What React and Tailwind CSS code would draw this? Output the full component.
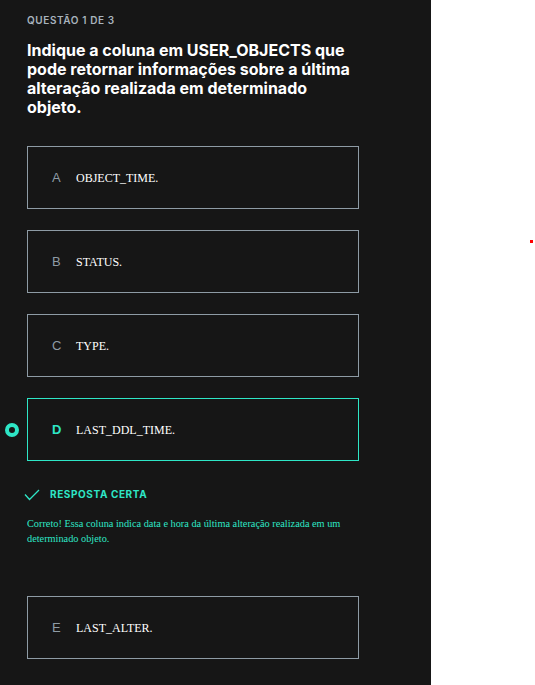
import React from 'react';

const options = [
  { letter: 'A', text: 'OBJECT_TIME.' },
  { letter: 'B', text: 'STATUS.' },
  { letter: 'C', text: 'TYPE.' },
  { letter: 'D', text: 'LAST_DDL_TIME.', selected: true },
  { letter: 'E', text: 'LAST_ALTER.' },
];

const Option = ({ letter, text, selected }) => (
  <div
    className={
      'relative flex items-center h-[63px] w-[332px] border ' +
      (selected ? 'border-[#2ee6c6]' : 'border-[#8e9ba5]')
    }
  >
    {selected && (
      <div className="absolute -left-[23px] top-1/2 -translate-y-1/2 h-[14px] w-[14px] rounded-full border-[4px] border-[#2ee6c6] bg-[#161616]" />
    )}
    <span
      className={
        'ml-[24px] w-[24px] font-["Liberation_Sans",sans-serif] text-[13px] ' +
        (selected ? 'text-[#2ee6c6] font-bold' : 'text-[#8e9ba5]')
      }
    >
      {letter}
    </span>
    <span className='font-["Liberation_Serif",serif] text-[12px] text-white'>{text}</span>
  </div>
);

const App = () => {
  return (
    <div className="flex w-[535px] min-h-[685px] bg-white">
      <div className='w-[431px] min-h-[685px] bg-[#161616] pl-[27px] pt-[13px] font-["Inter",sans-serif]'>
        <p className="text-[10px] font-semibold tracking-[0.06em] text-[#a8b3bd]">QUESTÃO 1 DE 3</p>
        <h1 className="mt-[13px] w-[326px] text-[16px] font-bold leading-[19px] text-white">
          Indique a coluna em USER_OBJECTS que pode retornar informações sobre a última alteração realizada em determinado objeto.
        </h1>
        <div className="mt-[29px] flex flex-col gap-[21px]">
          {options.slice(0, 4).map((o) => (
            <Option key={o.letter} {...o} />
          ))}
        </div>
        <div className="mt-[26px] -ml-[3px] flex items-center gap-[10px]">
          <svg width="16" height="12" viewBox="0 0 16 12" fill="none">
            <path d="M1 5.5 L5.5 10.5 L15 1" stroke="#2ee6c6" strokeWidth="1.3" />
          </svg>
          <span className="text-[10px] font-bold tracking-[0.06em] text-[#2ee6c6]">RESPOSTA CERTA</span>
        </div>
        <p className='mt-[14px] w-[330px] font-["Liberation_Serif",serif] text-[10.3px] leading-[15px] text-[#2ee6c6]'>
          Correto! Essa coluna indica data e hora da última alteração realizada em um determinado objeto.
        </p>
        <div className="mt-[50px] pb-[26px]">
          <Option {...options[4]} />
        </div>
      </div>
      <div className="relative flex-1">
        <div className="absolute left-[99px] top-[240px] h-[3px] w-[3px] bg-[#ff0000]" />
      </div>
    </div>
  );
};

export default App;
